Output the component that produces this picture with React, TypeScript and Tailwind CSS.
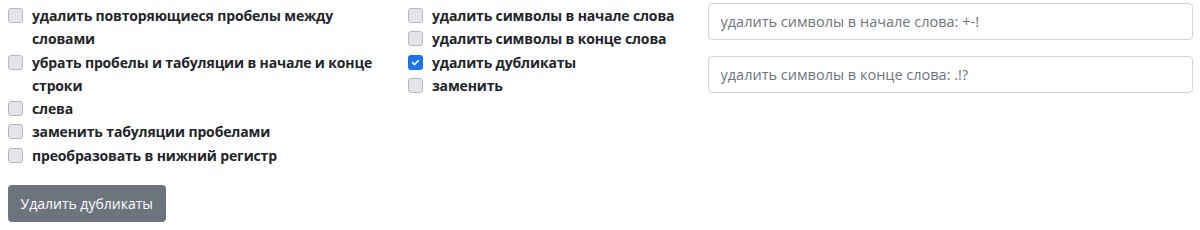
import React from "react";

const Box = ({ checked }: { checked?: boolean }) =>
  checked ? (
    <span className="mt-[4px] flex h-[15px] w-[15px] shrink-0 items-center justify-center rounded-[3px] bg-[#1a73e8]">
      <svg width="9" height="9" viewBox="0 0 10 10">
        <path d="M1.8 5.2 L4 7.3 L8.2 2.8" fill="none" stroke="white" strokeWidth="1.8" strokeLinecap="round" strokeLinejoin="round" />
      </svg>
    </span>
  ) : (
    <span className="mt-[4px] h-[15px] w-[15px] shrink-0 rounded-[3px] border border-[#b5b9be] bg-[#e3e5e8]" />
  );

const Item = ({ label, checked }: { label: string; checked?: boolean }) => (
  <div className="flex items-start gap-[9.5px]">
    <Box checked={checked} />
    <span className="font-bold text-[14px] tracking-[-0.15px] leading-[23.3px] text-[#212529]">{label}</span>
  </div>
);

export default function App() {
  return (
    <div className="w-[1200px] h-[230px] bg-white flex" style={{ fontFamily: '"Open Sans", "Noto Sans", sans-serif' }}>
      <div className="w-[400px] px-[7.5px] pt-[4px]">
        <div>
          <Item label="удалить повторяющиеся пробелы между словами" />
          <Item label="убрать пробелы и табуляции в начале и конце строки" />
          <Item label="слева" />
          <Item label="заменить табуляции пробелами" />
          <Item label="преобразовать в нижний регистр" />
        </div>
        <button className="mt-[18px] h-[37px] rounded-[4px] bg-[#6c757d] px-[13px] text-[14px] text-white">
          Удалить дубликаты
        </button>
      </div>
      <div className="w-[300px] px-[7.5px] pt-[4px]">
        <Item label="удалить символы в начале слова" />
        <Item label="удалить символы в конце слова" />
        <Item label="удалить дубликаты" checked />
        <Item label="заменить" />
      </div>
      <div className="w-[500px] px-[7.5px] pt-[3px] flex flex-col gap-[16px]">
        <input
          className="h-[37px] w-full rounded-[4px] border border-[#ced4da] px-[12px] text-[14.5px] placeholder:text-[#6c757d] outline-none"
          placeholder="удалить символы в начале слова: +-!"
        />
        <input
          className="h-[37px] w-full rounded-[4px] border border-[#ced4da] px-[12px] text-[14.5px] placeholder:text-[#6c757d] outline-none"
          placeholder="удалить символы в конце слова: .!?"
        />
      </div>
    </div>
  );
}
